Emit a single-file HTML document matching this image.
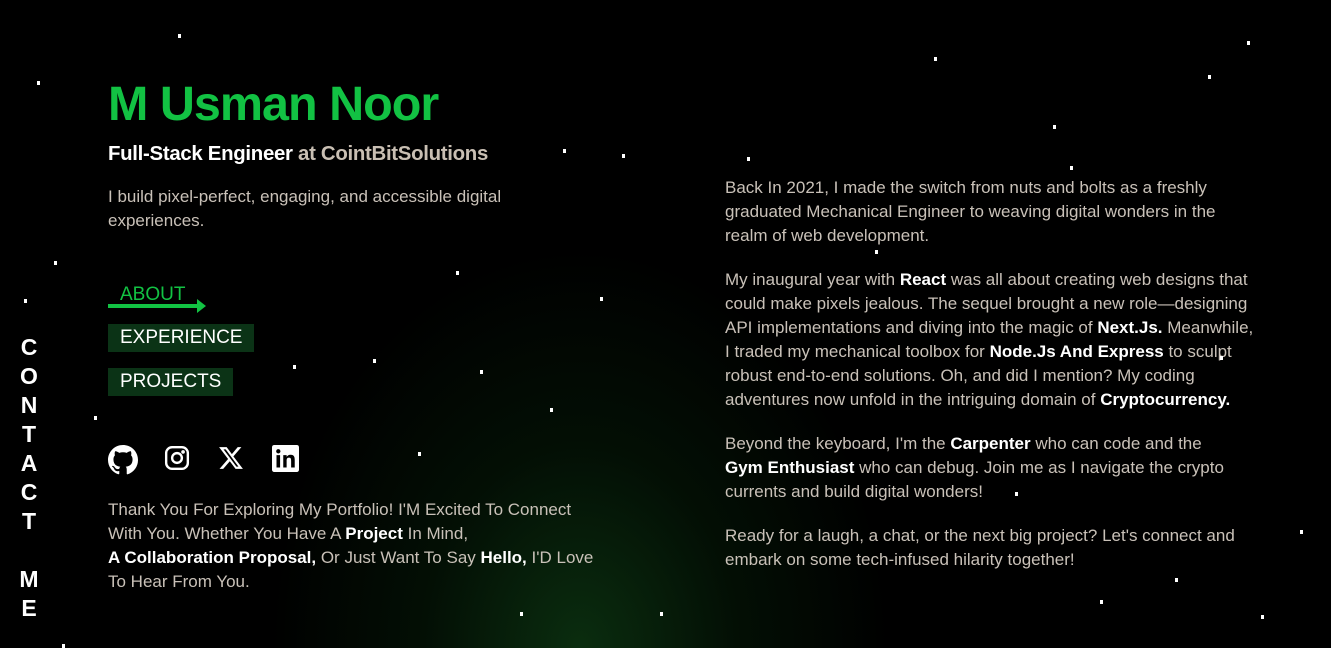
<!DOCTYPE html>
<html style="width:1331px;height:648px;overflow:hidden"><head><meta charset="utf-8"><style>
*{margin:0;padding:0;box-sizing:border-box}
body{width:1331px;height:648px;overflow:hidden;background:#000;font-family:"Liberation Sans",sans-serif;position:relative;color:#c9c1b8}
.glow{position:absolute;left:270px;top:250px;width:620px;height:398px;background:radial-gradient(ellipse 310px 400px at 50% 100%,rgba(20,90,30,.5) 0%,rgba(10,50,15,.3) 50%,rgba(0,0,0,0) 100%)}
.s{position:absolute;background:#fff;width:3px;height:4px}
h1{position:absolute;left:108px;top:76px;font-size:48.5px;font-weight:bold;color:#12c243;letter-spacing:-1px}
.sub{position:absolute;left:108px;top:143px;font-size:20.4px;font-weight:bold;color:#fff;letter-spacing:-.3px}
.sub span{color:#c9bfb3}
.p1{position:absolute;left:108px;top:185px;font-size:17px;line-height:24px;width:420px}
.nav{position:absolute;left:108px;font-size:19px;color:#fff;padding:0 12px;line-height:28px}
.nav.b{background:#0b3316}
.about{top:281px;color:#12c243}
.arrow{position:absolute;left:108px;top:304px;width:90px;height:4px;background:#12c243}
.arrow:after{content:"";position:absolute;right:-8px;top:-5px;border-left:9px solid #12c243;border-top:7px solid transparent;border-bottom:7px solid transparent}
.ic{position:absolute;top:445px}
.thanks{position:absolute;left:108px;top:498px;width:560px;white-space:nowrap;font-size:17px;line-height:24px}
b{color:#fff}
.right{position:absolute;left:725px;top:176px;width:532px;font-size:17px;line-height:24px}
.right p{margin-bottom:20px}
.contact{position:absolute;left:18px;top:333px;width:22px;font-size:23px;font-weight:bold;color:#fff;line-height:29px;text-align:center}
</style></head><body>
<div class="glow"></div>
<h1>M Usman Noor</h1>
<div class="sub">Full-Stack Engineer <span>at CointBitSolutions</span></div>
<div class="p1">I build pixel-perfect, engaging, and accessible digital experiences.</div>
<div class="nav about">ABOUT</div><div class="arrow"></div>
<div class="nav b" style="top:324px">EXPERIENCE</div>
<div class="nav b" style="top:368px">PROJECTS</div>
<svg class="ic" style="left:108px" width="30" height="30" viewBox="0 0 16 16"><path fill="#fff" d="M8 0C3.58 0 0 3.58 0 8c0 3.54 2.29 6.53 5.47 7.59.4.07.55-.17.55-.38v-1.33c-2.23.48-2.7-1.07-2.7-1.07-.36-.92-.89-1.17-.89-1.17-.73-.5.05-.49.05-.49.8.06 1.23.83 1.23.83.71 1.22 1.87.87 2.33.66.07-.52.28-.87.5-1.07-1.78-.2-3.64-.89-3.64-3.95 0-.87.31-1.59.82-2.15-.08-.2-.36-1.020.08-2.12 0 0 .67-.21 2.2.82a7.6 7.6 0 0 1 4 0c1.53-1.04 2.2-.82 2.2-.82.44 1.1.16 1.92.08 2.12.51.56.82 1.27.82 2.15 0 3.07-1.87 3.75-3.65 3.95.29.25.54.73.54 1.48v2.2c0 .21.15.46.55.38A8 8 0 0 0 16 8c0-4.42-3.58-8-8-8z"/></svg>
<svg class="ic" style="left:164px" width="26" height="26" viewBox="0 0 24 24" fill="none" stroke="#fff" stroke-width="2.2"><rect x="2" y="2" width="20" height="20" rx="5.5"/><circle cx="12" cy="12" r="4.5"/><circle cx="17.6" cy="6.4" r=".6" fill="#fff"/></svg>
<svg class="ic" style="left:218px" width="26" height="26" viewBox="0 0 24 24"><path fill="#fff" d="M18.2 2h3.4l-7.4 8.5L23 22h-6.8l-5.3-7-6.1 7H1.4l7.9-9.1L1 2h7l4.8 6.4zm-1.2 18h1.9L7.1 4H5.1z"/></svg>
<svg class="ic" style="left:272px" width="27" height="27" viewBox="0 0 24 24"><rect width="24" height="24" rx="2" fill="#fff"/><rect x="4" y="9" width="3.2" height="11" fill="#000"/><circle cx="5.6" cy="5.6" r="1.9" fill="#000"/><path fill="#000" d="M10 9h3v1.6c.6-1 1.8-1.9 3.6-1.9 3 0 3.6 2 3.6 4.6V20H17v-5.8c0-1.4 0-3-1.9-3s-2.1 1.4-2.1 2.9V20h-3z"/></svg>
<div class="thanks">Thank You For Exploring My Portfolio! I'M Excited To Connect<br>With You. Whether You Have A <b>Project</b> In Mind,<br><b>A Collaboration Proposal,</b> Or Just Want To Say <b>Hello,</b> I'D Love<br>To Hear From You.</div>
<div class="right">
<p>Back In 2021, I made the switch from nuts and bolts as a freshly graduated Mechanical Engineer to weaving digital wonders in the realm of web development.</p>
<p>My inaugural year with <b>React</b> was all about creating web designs that could make pixels jealous. The sequel brought a new role—designing API implementations and diving into the magic of <b>Next.Js.</b> Meanwhile, I traded my mechanical toolbox for <b>Node.Js And Express</b> to sculpt robust end-to-end solutions. Oh, and did I mention? My coding adventures now unfold in the intriguing domain of <b>Cryptocurrency.</b></p>
<p>Beyond the keyboard, I'm the <b>Carpenter</b> who can code and the<br><b>Gym Enthusiast</b> who can debug. Join me as I navigate the crypto currents and build digital wonders!</p>
<p>Ready for a laugh, a chat, or the next big project? Let's connect and embark on some tech-infused hilarity together!</p>
</div>
<div class="contact">C<br>O<br>N<br>T<br>A<br>C<br>T<br><br>M<br>E</div>
<div class="s" style="left:178px;top:34px"></div><div class="s" style="left:622px;top:154px"></div><div class="s" style="left:563px;top:149px"></div><div class="s" style="left:747px;top:157px"></div><div class="s" style="left:1070px;top:166px"></div><div class="s" style="left:1053px;top:125px"></div><div class="s" style="left:934px;top:57px"></div><div class="s" style="left:1208px;top:75px"></div><div class="s" style="left:1247px;top:41px"></div><div class="s" style="left:1175px;top:578px"></div><div class="s" style="left:1261px;top:615px"></div><div class="s" style="left:24px;top:299px"></div><div class="s" style="left:37px;top:81px"></div><div class="s" style="left:54px;top:261px"></div><div class="s" style="left:94px;top:416px"></div><div class="s" style="left:456px;top:271px"></div><div class="s" style="left:600px;top:297px"></div><div class="s" style="left:550px;top:408px"></div><div class="s" style="left:418px;top:452px"></div><div class="s" style="left:293px;top:365px"></div><div class="s" style="left:373px;top:359px"></div><div class="s" style="left:875px;top:250px"></div><div class="s" style="left:1015px;top:492px"></div><div class="s" style="left:1100px;top:600px"></div><div class="s" style="left:660px;top:612px"></div><div class="s" style="left:520px;top:612px"></div><div class="s" style="left:1220px;top:356px"></div><div class="s" style="left:1300px;top:530px"></div><div class="s" style="left:62px;top:644px"></div><div class="s" style="left:480px;top:370px"></div>
</body></html>
